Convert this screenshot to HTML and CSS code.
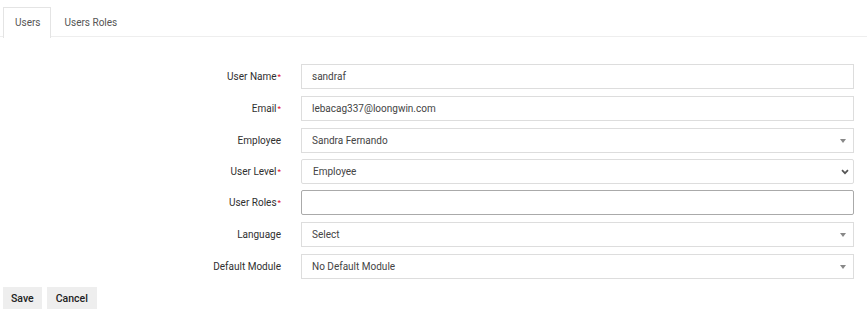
FILE: index.html
```html
<!DOCTYPE html>
<html>
<head>
<meta charset="utf-8">
<link rel="stylesheet" href="styles.css">
</head>
<body>
<div class="tabs">
  <div class="tab active">Users</div>
  <div class="tab">Users Roles</div>
</div>
<form class="form">
  <div class="row">
    <label class="label">User Name<span class="req">*</span></label>
    <div class="field input">sandraf</div>
  </div>
  <div class="row">
    <label class="label">Email<span class="req">*</span></label>
    <div class="field input">lebacag337@loongwin.com</div>
  </div>
  <div class="row tight">
    <label class="label">Employee</label>
    <div class="field select2">Sandra Fernando<span class="tri"></span></div>
  </div>
  <div class="row tight">
    <label class="label">User Level<span class="req">*</span></label>
    <div class="field native">Employee
      <svg class="chev" width="8" height="6" viewBox="0 0 8 6"><path d="M1 1.2 L4 4.2 L7 1.2" fill="none" stroke="#555" stroke-width="1.7"/></svg>
    </div>
  </div>
  <div class="row">
    <label class="label">User Roles<span class="req">*</span></label>
    <div class="field roles"></div>
  </div>
  <div class="row">
    <label class="label">Language</label>
    <div class="field select2">Select<span class="tri"></span></div>
  </div>
  <div class="row last">
    <label class="label">Default Module</label>
    <div class="field select2">No Default Module<span class="tri"></span></div>
  </div>
  <div class="buttons">
    <button type="button" class="btn">Save</button>
    <button type="button" class="btn btn-wide">Cancel</button>
  </div>
</form>
</body>
</html>
```
FILE: styles.css
```css
html, body {
  margin: 0;
  padding: 0;
  background: #fff;
  font-family: Roboto, "Liberation Sans", Arial, sans-serif;
  font-size: 10px;
  color: #333;
}
.tabs {
  display: flex;
  padding: 7px 0 0 3px;
  border-bottom: 1px solid #eee;
  height: 29px;
}
.tab {
  padding: 0 9px 0 11px;
  line-height: 29px;
  color: #555;
  border: 1px solid transparent;
  border-bottom: none;
  margin-right: 2px;
}
.tab.active {
  border-color: #e4e4e4;
  background: #fff;
  height: 30px;
  margin-bottom: -1px;
}
.form {
  padding: 27px 13px 0 0;
  display: flex;
  flex-direction: column;
}
.row {
  display: grid;
  grid-template-columns: 281px 1fr;
  column-gap: 20px;
  align-items: center;
  margin-bottom: 7px;
}
.row.tight {
  margin-bottom: 6px;
}
.row.last {
  margin-bottom: 8px;
}
.label {
  text-align: right;
  color: #2f2f2f;
  font-size: 10px;
}
.req {
  color: #e0001a;
  font-size: 8px;
  position: relative;
  top: -1px;
  margin-left: 1px;
}
.field {
  position: relative;
  height: 25px;
  box-sizing: border-box;
  border: 1px solid #ddd;
  padding: 0 10px;
  line-height: 23px;
  color: #444;
  font-size: 10px;
  background: #fff;
}
.native {
  padding-left: 11px;
  border-radius: 2px;
}
.roles {
  border-color: #aaa;
  border-radius: 2px;
}
.tri {
  position: absolute;
  right: 7px;
  top: 10px;
  width: 0;
  height: 0;
  border-left: 3px solid transparent;
  border-right: 3px solid transparent;
  border-top: 4px solid #888;
}
.chev {
  position: absolute;
  right: 4px;
  top: 9px;
}
.buttons {
  display: flex;
  gap: 5px;
  padding: 0 0 0 3px;
}
.btn {
  font-family: Roboto, "Liberation Sans", Arial, sans-serif;
  font-size: 10.5px;
  font-weight: 500;
  color: #222;
  background: #eee;
  border: none;
  border-bottom: 1px solid #ddd;
  height: 23px;
  padding: 0 8px;
  cursor: pointer;
}
.btn-wide {
  padding: 0 9px;
}
```
